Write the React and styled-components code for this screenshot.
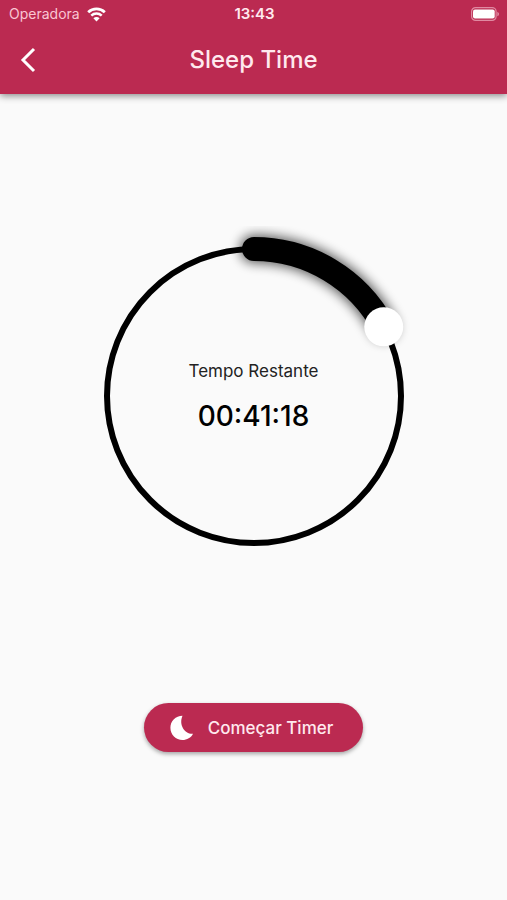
import React, { useState } from "react";
import styled, { createGlobalStyle } from "styled-components";

const MAX_SECONDS = 4 * 60 * 60;
const CENTER = 170;
const RADIUS = 147;

const GlobalStyle = createGlobalStyle`
  *, *::before, *::after { box-sizing: border-box; }
  body {
    margin: 0;
    background: #fafafa;
    color: #000;
    font-family: Inter, "Liberation Sans", sans-serif;
  }
  button, input { font: inherit; }
`;

const Screen = styled.div`
  min-height: 100vh;
  display: flex;
  flex-direction: column;
`;

const Header = styled.header`
  background: #bb2a51;
  color: #ffe9ee;
  box-shadow: 0 2px 7px rgba(0, 0, 0, 0.45);
`;

const StatusBar = styled.div`
  display: grid;
  grid-template-columns: 1fr auto 1fr;
  align-items: center;
  height: 26px;
  padding: 2px 7px 0 9px;
  line-height: 20px;
`;

const Carrier = styled.div`
  display: flex;
  align-items: center;
  gap: 7px;
  font-size: 14px;
  color: #f9c6d3;
`;

const Clock = styled.time`
  font-size: 15px;
  font-weight: 600;
`;

const Battery = styled.div`
  display: flex;
  justify-content: flex-end;
`;

const AppBar = styled.div`
  display: grid;
  grid-template-columns: 56px 1fr 56px;
  align-items: center;
  height: 68px;
`;

const BackButton = styled.button`
  display: flex;
  align-items: center;
  justify-content: center;
  width: 56px;
  height: 56px;
  padding: 0;
  border: 0;
  background: none;
  color: #fff;
  cursor: pointer;
`;

const Title = styled.h1`
  margin: 0;
  text-align: center;
  font-size: 24px;
  line-height: 32px;
  font-weight: 500;
`;

const Content = styled.main`
  flex: 1;
  display: flex;
  flex-direction: column;
  align-items: center;
  gap: 137px;
  padding: 132px 16px 24px;
`;

const Dial = styled.div`
  display: grid;
  place-items: center;
  width: 100%;
  max-width: 340px;
  > * { grid-area: 1 / 1; }
`;

const DialDrawing = styled.svg`
  display: block;
  width: 100%;
  height: auto;
`;

const DialInput = styled.input`
  width: 100%;
  height: 100%;
  margin: 0;
  opacity: 0;
  cursor: pointer;
`;

const Readout = styled.div`
  display: flex;
  flex-direction: column;
  align-items: center;
  gap: 15px;
  pointer-events: none;
`;

const ReadoutLabel = styled.label`
  font-size: 17px;
  line-height: 24px;
  color: #222;
`;

const ReadoutValue = styled.output`
  font-size: 28px;
  line-height: 36px;
  font-weight: 500;
`;

const StartButton = styled.button`
  display: flex;
  align-items: center;
  gap: 13px;
  height: 49px;
  padding: 0 30px 0 25px;
  border: 0;
  border-radius: 25px;
  background: #bb2a51;
  color: #ffe9ee;
  font-size: 17px;
  line-height: 24px;
  font-weight: 500;
  box-shadow: 0 2px 4px rgba(0, 0, 0, 0.35);
  cursor: pointer;
`;

function WifiIcon() {
  return (
    <svg width="19" height="15" viewBox="0 0 19 15" fill="none" stroke="#fff" aria-hidden="true">
      <path d="M1.2 5.2C5.8.8 13.2.8 17.8 5.2" strokeWidth="2.8" />
      <path d="M4.3 8.6C7.2 5.8 11.8 5.8 14.7 8.6" strokeWidth="2.5" />
      <path d="M9.5 14.4 6.4 11.3C8.1 9.7 10.9 9.7 12.6 11.3Z" fill="#fff" stroke="none" />
    </svg>
  );
}

function BatteryIcon() {
  return (
    <svg width="30" height="14" viewBox="0 0 30 14" aria-hidden="true">
      <rect x="1.6" y="0.6" width="24.5" height="12.8" rx="4" fill="none" stroke="#e08aa2" strokeWidth="1.2" />
      <rect x="3" y="2.5" width="21.7" height="9" rx="2" fill="#fff" />
      <path d="M27.3 4.7v4.6c1-.4 1.7-1.3 1.7-2.3s-.7-1.9-1.7-2.3Z" fill="#e08aa2" />
    </svg>
  );
}

function BackIcon() {
  return (
    <svg width="16" height="26" viewBox="0 0 16 26" fill="none" stroke="currentColor" strokeWidth="3" aria-hidden="true">
      <path d="M14 2 3 13 14 24" />
    </svg>
  );
}

function MoonIcon() {
  return (
    <svg width="26" height="26" viewBox="0 0 26 26" fill="#fff" aria-hidden="true">
      <path d="M13.5.7C6.7.7 1.4 6 1.4 12.8 1.4 19.7 6.9 25 13.5 25c4.5 0 8.6-2.4 10.500-6.300C16.300 19.500 9.300 10.200 13.500.7Z" />
    </svg>
  );
}

function formatTime(seconds) {
  return [Math.floor(seconds / 3600), Math.floor(seconds / 60) % 60, seconds % 60]
    .map((part) => String(part).padStart(2, "0"))
    .join(":");
}

function DialFace({ seconds }) {
  const angle = (Math.min(seconds, MAX_SECONDS - 1) / MAX_SECONDS) * Math.PI * 2;
  const x = CENTER + RADIUS * Math.sin(angle);
  const y = CENTER - RADIUS * Math.cos(angle);
  const arc = `M${CENTER} ${CENTER - RADIUS}A${RADIUS} ${RADIUS} 0 ${angle > Math.PI ? 1 : 0} 1 ${x} ${y}`;
  return (
    <DialDrawing viewBox="0 0 340 340" fill="none" overflow="visible" aria-hidden="true">
      <defs>
        <filter id="glow" x="0" y="0" width="340" height="340" filterUnits="userSpaceOnUse">
          <feGaussianBlur stdDeviation="6" />
        </filter>
      </defs>
      <circle cx={CENTER} cy={CENTER} r={RADIUS} stroke="#000" strokeWidth="6" />
      <path d={arc} stroke="#000" strokeWidth="28" strokeLinecap="round" opacity="0.65" filter="url(#glow)" />
      <path d={arc} stroke="#000" strokeWidth="24" strokeLinecap="round" />
      <circle cx={x} cy={y} r="19.5" fill="#fff" />
    </DialDrawing>
  );
}

export default function App() {
  const [seconds, setSeconds] = useState(2478);
  return (
    <>
      <GlobalStyle />
      <Screen>
        <Header>
          <StatusBar>
            <Carrier>
              <span>Operadora</span>
              <WifiIcon />
            </Carrier>
            <Clock>13:43</Clock>
            <Battery>
              <BatteryIcon />
            </Battery>
          </StatusBar>
          <AppBar>
            <BackButton type="button" aria-label="Voltar">
              <BackIcon />
            </BackButton>
            <Title>Sleep Time</Title>
          </AppBar>
        </Header>
        <Content>
          <Dial>
            <DialFace seconds={seconds} />
            <DialInput
              id="remaining"
              type="range"
              min="0"
              max={MAX_SECONDS}
              value={seconds}
              aria-valuetext={formatTime(seconds)}
              onChange={(event) => setSeconds(Number(event.target.value))}
            />
            <Readout>
              <ReadoutLabel htmlFor="remaining">Tempo Restante</ReadoutLabel>
              <ReadoutValue htmlFor="remaining">{formatTime(seconds)}</ReadoutValue>
            </Readout>
          </Dial>
          <StartButton type="button">
            <MoonIcon />
            Começar Timer
          </StartButton>
        </Content>
      </Screen>
    </>
  );
}
